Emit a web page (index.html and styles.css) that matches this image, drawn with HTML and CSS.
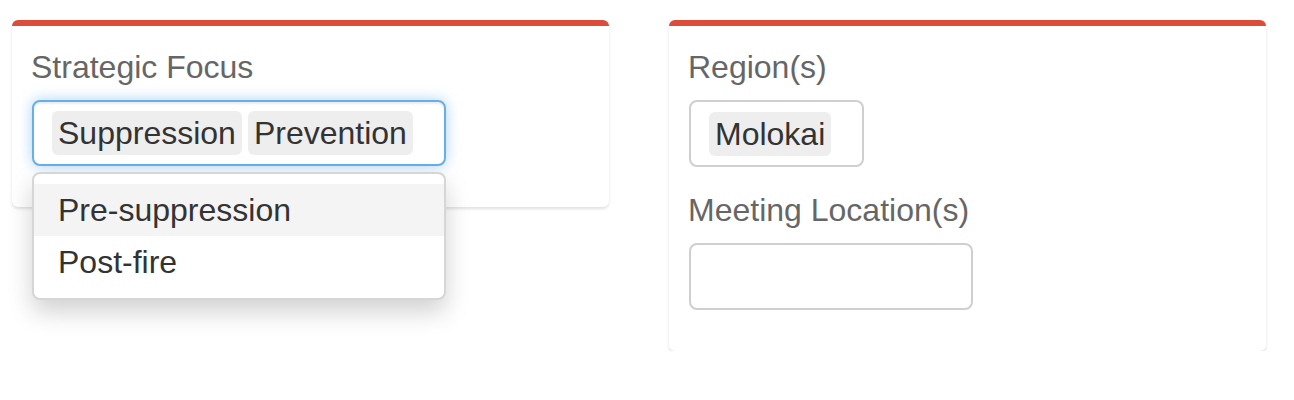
FILE: index.html
```html
<!DOCTYPE html>
<html>
<head>
<meta charset="utf-8">
<link rel="stylesheet" href="styles.css">
</head>
<body>
<div class="row">
  <section class="box">
    <div class="group">
      <label class="label">Strategic Focus</label>
      <div class="select-wrap">
        <div class="tags focused">
          <span class="tag">Suppression</span>
          <span class="tag">Prevention</span>
        </div>
        <ul class="dropdown">
          <li class="option active">Pre-suppression</li>
          <li class="option">Post-fire</li>
        </ul>
      </div>
    </div>
  </section>
  <section class="box">
    <div class="group">
      <label class="label">Region(s)</label>
      <div class="select-wrap">
        <div class="tags">
          <span class="tag">Molokai</span>
        </div>
      </div>
    </div>
    <div class="group">
      <label class="label">Meeting Location(s)</label>
      <div class="select-wrap">
        <div class="tags empty"></div>
      </div>
    </div>
  </section>
</div>
</body>
</html>
```
FILE: styles.css
```css
html, body {
  margin: 0;
  padding: 0;
  background: #ffffff;
}
body {
  font-family: "Liberation Sans", Arial, Helvetica, sans-serif;
  color: #333333;
}
.row {
  display: flex;
  align-items: flex-start;
  gap: 60px;
  padding: 20px 0 0 12px;
}
.box {
  width: 597px;
  box-sizing: border-box;
  background: #ffffff;
  border-top: 6px solid #dd4b39;
  border-radius: 6px;
  box-shadow: 0 2px 3px rgba(0, 0, 0, 0.12);
  padding: 21px 20px 41px 19px;
  display: flex;
  flex-direction: column;
  gap: 23px;
}
.group {
  display: flex;
  flex-direction: column;
  align-items: flex-start;
}
.label {
  font-size: 32px;
  line-height: 40px;
  color: #666666;
  margin-bottom: 13px;
}
.select-wrap {
  position: relative;
  margin-left: 1px;
}
.tags {
  display: flex;
  gap: 6px;
  height: 67px;
  box-sizing: border-box;
  border: 2px solid #cfcfcf;
  border-radius: 8px;
  padding: 10px 31px 10px 18px;
  align-items: center;
  background: #fff;
}
.tags.focused {
  height: 66px;
  border-color: #66afe9;
  box-shadow: inset 0 2px 2px rgba(0, 0, 0, 0.075), 0 0 14px rgba(102, 175, 233, 0.55);
}
.tags.empty {
  width: 284px;
}
.tag {
  background: #eeeeee;
  border-radius: 6px;
  padding: 0 6px;
  font-size: 32px;
  line-height: 44px;
  height: 44px;
  color: #333333;
  white-space: nowrap;
}
.dropdown {
  position: absolute;
  left: 0;
  right: 0;
  top: 72px;
  margin: 0;
  padding: 10px 0 10px 0;
  list-style: none;
  background: #ffffff;
  border: 2px solid #d6d6d6;
  border-radius: 8px;
  box-shadow: 0 12px 24px rgba(0, 0, 0, 0.18);
  z-index: 5;
}
.option {
  font-size: 32px;
  line-height: 52px;
  height: 52px;
  padding-left: 24px;
  color: #333333;
}
.option.active {
  background: #f4f4f4;
}
```
